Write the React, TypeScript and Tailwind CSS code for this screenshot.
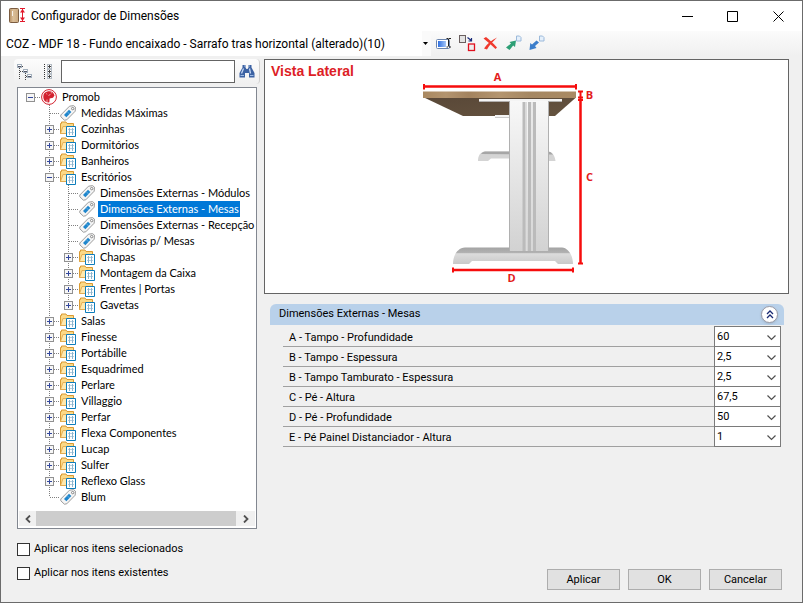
import { useState } from "react";
import type { ReactNode } from "react";

type TreeNode = { label: string; children?: TreeNode[] };

const TREE: TreeNode = {
  label: "Promob",
  children: [
    { label: "Medidas Máximas" },
    { label: "Cozinhas", children: [] },
    { label: "Dormitórios", children: [] },
    { label: "Banheiros", children: [] },
    {
      label: "Escritórios",
      children: [
        { label: "Dimensões Externas - Módulos" },
        { label: "Dimensões Externas - Mesas" },
        { label: "Dimensões Externas - Recepção" },
        { label: "Divisórias p/ Mesas" },
        { label: "Chapas", children: [] },
        { label: "Montagem da Caixa", children: [] },
        { label: "Frentes | Portas", children: [] },
        { label: "Gavetas", children: [] },
      ],
    },
    { label: "Salas", children: [] },
    { label: "Finesse", children: [] },
    { label: "Portábille", children: [] },
    { label: "Esquadrimed", children: [] },
    { label: "Perlare", children: [] },
    { label: "Villaggio", children: [] },
    { label: "Perfar", children: [] },
    { label: "Flexa Componentes", children: [] },
    { label: "Lucap", children: [] },
    { label: "Sulfer", children: [] },
    { label: "Reflexo Glass", children: [] },
    { label: "Blum" },
  ],
};

const FIELDS = [
  { label: "A - Tampo - Profundidade", value: "60" },
  { label: "B - Tampo - Espessura", value: "2,5" },
  { label: "B - Tampo Tamburato - Espessura", value: "2,5" },
  { label: "C - Pé - Altura", value: "67,5" },
  { label: "D - Pé - Profundidade", value: "50" },
  { label: "E - Pé Painel Distanciador - Altura", value: "1" },
];

function BrandIcon() {
  return (
    <svg width="16" height="16" viewBox="0 0 16 16" className="shrink-0">
      <circle cx="8" cy="8" r="7.4" fill="#fff" stroke="#d3222f" />
      <path d="M7.500 13.600A5.700 5.700 0 1 1 13.500 6.500L12 8.800 8.600 9.400 8.400 13.200z" fill="#d3222f" />
      <path d="M7.500 6.500l2-1.200M10.200 3.200l.6 1.200M5.200 4.600l1 .6M6 10.500v2.500" stroke="#fff" strokeWidth=".6" fill="none" />
    </svg>
  );
}

function TagIcon() {
  return (
    <svg width="16" height="16" viewBox="0 0 16 16" className="shrink-0">
      <path d="M9.500 1.200L13.500.600l2 1.600-.3 4L6.800 14.800 4.400 15.200.800 11.800v-1.800z" fill="#f5f5f5" stroke="#929292" strokeWidth=".9" />
      <path d="M9 4.800l2.400 2.300-5 5.200L4 10z" fill="#1f86cc" />
      <path d="M7.200 6.600l2.400 2.400" stroke="#8cc3e8" strokeWidth=".6" />
      <circle cx="12.700" cy="3.600" r="1.200" fill="#fff" stroke="#7d7d7d" strokeWidth=".9" />
    </svg>
  );
}

function FolderIcon() {
  return (
    <svg width="16" height="16" viewBox="0 0 16 16" className="shrink-0">
      <path d="M.500 12.500v-10h1v-1.500h4.500l1 1.500h6.500v10z" fill="#fbd987" stroke="#d99a33" />
      <path d="M.500 12.500L3 5.500h11v7z" fill="#ffe9ae" stroke="#dfa548" strokeWidth=".8" />
      <path d="M6.500 5.500h9v10h-9z" fill="#fff" stroke="#0d7dbb" />
      <path d="M8 8.500h6M8 11.500h6" stroke="#b3cfe0" fill="none" />
      <path d="M9.500 7v7M12.500 7v7" stroke="#8fb5cd" fill="none" />
    </svg>
  );
}

// One indentation column: the dotted connector lines that lead to an item.
function Guide({ up, down, across, children }: { up?: boolean; down?: boolean; across?: boolean; children?: ReactNode }) {
  return (
    <span className="relative flex h-4 w-[19px] shrink-0 items-center justify-center">
      <svg width="19" height="16" className="absolute inset-0" stroke="#808080" strokeDasharray="1 1" shapeRendering="crispEdges">
        {up && <path d="M9.5 0v8" />}
        {down && <path d="M9.5 8v8" />}
        {across && <path d="M10 8.5h9" />}
      </svg>
      {children}
    </span>
  );
}

function Toggle({ label, open, onClick }: { label: string; open: boolean; onClick: () => void }) {
  return (
    <button type="button" aria-label={label} aria-expanded={open} onClick={onClick} className="relative block size-[9px]">
      <svg width="9" height="9" viewBox="0 0 9 9" shapeRendering="crispEdges" className="block">
        <rect x=".5" y=".5" width="8" height="8" fill="#f6f6f6" stroke="#919191" />
        <path d={open ? "M2 4.5h5" : "M2 4.5h5M4.5 2v5"} stroke="#33479c" />
      </svg>
    </button>
  );
}

type RowProps = {
  node: TreeNode;
  last: boolean;
  trail: boolean[];
  selected: string;
  onSelect: (label: string) => void;
};

function TreeItem({ node, last, trail, selected, onSelect }: RowProps) {
  const [open, setOpen] = useState(node.label === "Promob" || node.label === "Escritórios");
  const root = node.label === "Promob";
  const active = node.label === selected;
  const childTrail = root ? [false] : [...trail, !last];

  return (
    <li>
      <div className="flex h-4 items-center">
        {trail.map((line, i) => (
          <Guide key={i} up={line} down={line} />
        ))}
        <Guide up={!root} down={!last} across>
          {node.children && <Toggle label={node.label} open={open} onClick={() => setOpen(!open)} />}
        </Guide>
        <span className="ml-px flex shrink-0">
          {root ? <BrandIcon /> : node.children ? <FolderIcon /> : <TagIcon />}
        </span>
        <button
          type="button"
          onClick={() => onSelect(node.label)}
          className={`ml-[3px] h-4 whitespace-nowrap pr-px pl-0.5 leading-4 ${active ? "bg-[#0078d7] text-white" : ""}`}
        >
          {node.label}
        </button>
      </div>
      {open && node.children && (
        <ul>
          {node.children.map((child, i) => (
            <TreeItem
              key={child.label}
              node={child}
              last={i === node.children!.length - 1}
              trail={childTrail}
              selected={selected}
              onSelect={onSelect}
            />
          ))}
        </ul>
      )}
    </li>
  );
}

function TitleBar() {
  return (
    <header className="flex h-[30px] items-center bg-white pl-2">
      <svg width="17" height="16" viewBox="0 0 17 16">
        <defs>
          <linearGradient id="door" x2="1">
            <stop offset="0" stopColor="#b58e62" />
            <stop offset=".4" stopColor="#dcc09a" />
            <stop offset="1" stopColor="#c9a87e" />
          </linearGradient>
        </defs>
        <rect x=".5" y=".5" width="9" height="14" rx="1" fill="url(#door)" stroke="#7b5c40" />
        <path d="M3.500 3v5" stroke="#fff" strokeOpacity=".8" />
        <path d="M11 .500h5M11 13.500h5M13.500 1v12" stroke="#e2182b" />
        <path d="M13.500 1l2.500 3.500h-5zM13.500 13l2.500-3.500h-5z" fill="#e2182b" />
      </svg>
      <h1 className="ml-[5px] flex-1 font-['Roboto',sans-serif] text-[12px]">Configurador de Dimensões</h1>
      <button type="button" aria-label="Minimizar" className="flex h-full w-[45px] items-center justify-center">
        <svg width="11" height="11" stroke="#000"><path d="M0 5.5h11" /></svg>
      </button>
      <button type="button" aria-label="Maximizar" className="flex h-full w-[45px] items-center justify-center">
        <svg width="11" height="11" fill="none" stroke="#000"><path d="M.5.5h10v10H.5z" /></svg>
      </button>
      <button type="button" aria-label="Fechar" className="flex h-full w-[47px] items-center justify-center">
        <svg width="11" height="11" stroke="#000"><path d="M.5.5l10 10M10.5.5l-10 10" /></svg>
      </button>
    </header>
  );
}

function MainToolbar() {
  return (
    <div className="flex h-[25px] items-center bg-linear-to-b from-[#fbfbfb] to-[#f0f0f0]">
      <div className="relative h-full w-[430px] shrink-0 bg-linear-to-r from-white from-98% to-[#fafafa] to-98%">
        <select
          aria-label="Configuração"
          className="h-full w-full appearance-none bg-transparent pl-[5px] font-['Roboto',sans-serif] text-[12px] outline-none"
        >
          <option>COZ - MDF 18 - Fundo encaixado - Sarrafo tras horizontal (alterado)(10)</option>
        </select>
        <svg width="5" height="3" className="pointer-events-none absolute top-[11px] right-[3px]"><path d="M0 0h5L2.5 3z" /></svg>
      </div>
      <div className="ml-[5px] flex items-center gap-[7px] pb-px">
        <button type="button" aria-label="Renomear">
          <svg width="16" height="16" viewBox="0 0 16 16" className="block">
            <defs>
              <linearGradient id="field" x2="1">
                <stop offset="0" stopColor="#2f6fe0" />
                <stop offset="1" stopColor="#a5c6f7" />
              </linearGradient>
            </defs>
            <rect x=".5" y="4.500" width="13" height="9" rx="1" fill="#fff" stroke="#6b84ad" />
            <rect x="2" y="6" width="8" height="6" fill="url(#field)" />
            <path d="M12.500 3.500v8" stroke="#222" />
            <path d="M10.500 3.500h1.500M13 3.500h2M10.500 12h1.500M13 12h2" stroke="#222" />
          </svg>
        </button>
        <button type="button" aria-label="Duplicar">
          <svg width="17" height="17" viewBox="0 0 17 17" className="block">
            <rect x=".5" y=".5" width="6" height="7" fill="#e3e3e3" stroke="#6a5f5f" />
            <path d="M8.500 2.500l3.500 2.800M12.500 3v3h-3" fill="none" stroke="#1b2c7a" strokeWidth="1.2" />
            <rect x="9.500" y="9" width="6" height="6.500" fill="#eee" stroke="#e0101e" strokeWidth="1.300" />
          </svg>
        </button>
        <button type="button" aria-label="Excluir">
          <svg width="16" height="16" viewBox="0 0 16 16" className="block" fill="#f03a2e">
            <path d="M.5 3.500L3 2C6 4.500 10 8 14 12.500L12.500 14C9 10.500 5 7 .5 3.500z" />
            <path d="M14 2.500C10 6.500 6.500 10 4 14.500L1 13.500C4 9 8.500 5 14 2.500z" />
          </svg>
        </button>
        <button type="button" aria-label="Exportar">
          <svg width="16" height="16" viewBox="0 0 16 16" className="block">
            <path d="M0 12.500L5 8.500 3.500 7l6.500-1.500L9 12 7.200 10.500 3.500 15z" fill="#2d9f75" />
            <path d="M10.500 1h3L15 2.500V6h-4.500z" fill="#e5f0fb" stroke="#9bb9da" />
          </svg>
        </button>
        <button type="button" aria-label="Importar">
          <svg width="16" height="16" viewBox="0 0 16 16" className="block">
            <path d="M10 7.500L6 11 7.500 13 .5 15l.8-7L3 9.500 7.500 5.500z" fill="#3c7ecb" />
            <path d="M10.500 1h3L15 2.500V6h-4.500z" fill="#e5f0fb" stroke="#9bb9da" />
          </svg>
        </button>
      </div>
    </div>
  );
}

function SearchBar() {
  return (
    <div className="mx-[-3px] flex h-[25px] items-center rounded-sm border-r border-[#d0d0d0] bg-linear-to-b from-[#fcfcfc] to-[#f0f0f0] pl-[3px] pr-1">
      <button type="button" aria-label="Recolher tudo">
        <svg width="16" height="16" viewBox="0 0 16 16" className="block" fill="none" shapeRendering="crispEdges">
          <path d="M2.500 4v12M5 2.500h2M8.500 9v7M3 7.500h3M9 12.500h3" stroke="#444" strokeDasharray="1 1" />
          <path d="M.500.500h4v3h-4zM6.500 5.500h4v3h-4zM10.500 10.500h4v3h-4z" fill="#fff" stroke="#a3b0bd" />
          <path d="M1 2h3M7 7h3M11 12h3" stroke="#556" />
        </svg>
      </button>
      <button type="button" aria-label="Expandir tudo" className="ml-2">
        <svg width="13" height="16" viewBox="0 0 13 16" className="block" fill="none" shapeRendering="crispEdges">
          <path d="M3.500 0v16M8.500 0v16" stroke="#333" strokeDasharray="1 1" />
          <path d="M6.500 .500h4v4h-4zM6.500 5.500h4v4h-4zM6.500 10.500h4v4h-4z" fill="#fff" stroke="#b4bcc4" />
          <path d="M7 2.500h3M8.500 1v3M7 7.500h3M8.500 6v3M7 12.500h3M8.500 11v3" stroke="#444" />
        </svg>
      </button>
      <input aria-label="Pesquisar" className="ml-[7px] h-[23px] min-w-0 flex-1 border border-[#646464] bg-white px-1 outline-none" />
      <button type="button" aria-label="Localizar" className="ml-1">
        <svg width="16" height="16" viewBox="0 0 16 16" className="block">
          <path d="M3.500 1h3v2.500L7.500 5h1L9.500 3.500V1h3v2.500L15.500 9v4.500h-5.500V9h-4v4.500H.500V9l3-5.500z" fill="#3c62a3" />
          <path d="M4.500 4.500L2.500 9.500M10.500 4.500L11.500 9.500" stroke="#c3d6f2" strokeWidth="1.300" />
          <path d="M1.500 11.500h3.500M11 11.500h3.500M5 2h1M10 2h1" stroke="#9dbbe6" />
        </svg>
      </button>
    </div>
  );
}

function TreePanel() {
  const [selected, setSelected] = useState("Dimensões Externas - Mesas");

  return (
    <div className="mt-[3px] flex flex-1 flex-col border border-[#828790] bg-white px-px">
      <ul className="flex-1 overflow-hidden pt-px pb-1.5 pl-0.5 font-['Lato',sans-serif] text-[11px]">
        <TreeItem node={TREE} last trail={[]} selected={selected} onSelect={setSelected} />
      </ul>
      <div className="mb-0.5 flex h-[15px] bg-[#f0f0f0]">
        <button type="button" aria-label="Rolar para a esquerda" className="flex w-[17px] items-center justify-center">
          <svg width="6" height="8" fill="none" stroke="#505050" strokeWidth="1.800"><path d="M5 .500L1.500 4 5 7.500" /></svg>
        </button>
        <div className="flex-1 bg-[#cdcdcd]" />
        <button type="button" aria-label="Rolar para a direita" className="flex w-[19px] items-center justify-center">
          <svg width="6" height="8" fill="none" stroke="#505050" strokeWidth="1.800"><path d="M1 .500L4.500 4 1 7.500" /></svg>
        </button>
      </div>
    </div>
  );
}

// Side view of the desk with its dimension lines.
function DeskDrawing() {
  return (
    <svg width="220" height="233" viewBox="0 0 220 233" role="img" aria-label="Vista lateral da mesa" className="shrink-0">
      <defs>
        <linearGradient id="wood" x2="1">
          <stop offset="0" stopColor="#a98860" />
          <stop offset=".15" stopColor="#b3946f" />
          <stop offset=".3" stopColor="#a3835f" />
          <stop offset=".5" stopColor="#b4956f" />
          <stop offset=".7" stopColor="#a58762" />
          <stop offset="1" stopColor="#a98a64" />
        </linearGradient>
        <linearGradient id="under" x2="1" y2="1">
          <stop offset="0" stopColor="#594838" />
          <stop offset="1" stopColor="#65533f" />
        </linearGradient>
        <linearGradient id="leg" x2="0" y2="1">
          <stop offset="0" stopColor="#f8f8f8" />
          <stop offset="1" stopColor="#d2d2d2" />
        </linearGradient>
        <linearGradient id="foot" x2="0" y2="1">
          <stop offset="0" stopColor="#a4a4a4" />
          <stop offset=".3" stopColor="#b0b0b0" />
          <stop offset=".38" stopColor="#dcdcdc" />
          <stop offset="1" stopColor="#c9c9c9" />
        </linearGradient>
      </defs>

      {/* Rear foot */}
      <path d="M78 101c0-5 2-9 7-9.500h63c5 .5 7 5 7.500 9.500H145l-2-2.500H91L88 101z" fill="#d4d4d4" />
      <path d="M81 94q1.500-2.500 4-2.500h63q3 0 5 3z" fill="#a6a6a6" />

      {/* Top */}
      <path d="M24 37.500h152L155 56H63z" fill="url(#under)" />
      <path d="M23 31.500h153V38H23z" fill="url(#wood)" />
      <path d="M79 39h83v2.500H79zM95 55h14v2H95z" fill="#f4f4f4" />
      <path d="M79 41.500h83M95 57.500h14" stroke="#b5b5b5" strokeWidth=".7" />

      {/* Front foot */}
      <path d="M53 204c0-8 4-16 12-16.500h97c7 .5 11 9 11 16.500h-15l-3-3H72l-3 3z" fill="url(#foot)" />

      {/* Column */}
      <path d="M109 41h40v150h-40z" fill="url(#leg)" />
      <path d="M109.500 41v150M148.500 41v150" stroke="#b0b0b0" />
      <path d="M124 42v149M129.500 42v149M134.500 42v149" stroke="#bbb" strokeWidth="3" />
      <path d="M126.500 42v149M132 42v149" stroke="#dcdcdc" strokeWidth="1" />

      <g stroke="#f60d0d" fill="none">
        <path d="M24 26.500h152M53 210h120M180.500 40v163" strokeWidth="2.500" />
        <path d="M24 24v5.500M176 24v5.500M53 207.500v5M173 207.500v5M178 203.500h5M178 31.500h5M178 37.500h5M178 40h5M180.500 31v8" strokeWidth="2" />
      </g>
      <g className="fill-[#e31b1b] font-['Open_Sans',sans-serif] text-[11px] font-bold" textAnchor="middle">
        <text x="97.500" y="21">A</text>
        <text x="189.500" y="39">B</text>
        <text x="189.500" y="121">C</text>
        <text x="111.500" y="222">D</text>
      </g>
    </svg>
  );
}

function Preview() {
  return (
    <section className="flex border border-[#646464] bg-white">
      <h2 className="w-[135px] shrink-0 pt-0.5 pl-1.5 font-['Liberation_Sans',sans-serif] text-[14px] leading-[18px] font-bold text-[#dd1e26]">
        Vista Lateral
      </h2>
      <DeskDrawing />
    </section>
  );
}

function Dimensions() {
  const [open, setOpen] = useState(true);

  return (
    <section className="mt-2.5 mr-[5px] ml-1.5">
      <div className="flex h-[21px] items-center rounded-t-md bg-[#b9d1ea] pr-1.5 pl-[9px]">
        <h2 className="flex-1">Dimensões Externas - Mesas</h2>
        <button
          type="button"
          aria-label="Recolher"
          aria-expanded={open}
          onClick={() => setOpen(!open)}
          className="flex size-[17px] items-center justify-center rounded-full border border-[#9a9aa6] bg-white shadow-sm"
        >
          <svg width="8" height="9" fill="none" stroke="#1a2a73" strokeWidth="1.300"><path d="M1 4l3-3 3 3M1 8l3-3 3 3" /></svg>
        </button>
      </div>
      {open && (
        <div className="mt-0.5 mr-[3px] ml-[13px]">
          {FIELDS.map((field, i) => (
            <div key={i} className="flex h-5 items-stretch border-b border-[#a0a0a0]">
              <label htmlFor={`field-${i}`} className="flex-1 pt-px pl-1.5 leading-5">{field.label}</label>
              <div className="relative -mt-px -mb-px w-[67px] border border-[#7a7a7a] bg-white">
                <select
                  id={`field-${i}`}
                  defaultValue={field.value}
                  className="block h-full w-full appearance-none bg-transparent pl-0.5 text-[11px] leading-[18px] outline-none"
                >
                  <option>{field.value}</option>
                </select>
                <svg width="9" height="6" className="pointer-events-none absolute top-2 right-1" fill="none" stroke="#505050" strokeWidth="1.200">
                  <path d="M.500.500l4 4 4-4" />
                </svg>
              </div>
            </div>
          ))}
        </div>
      )}
    </section>
  );
}

const BUTTON = "h-[21px] w-[73px] border border-[#adadad] bg-[#e1e1e1] text-[11px] leading-none";
const CHECK = "size-[13px] appearance-none border border-[#333] bg-white checked:bg-[#0078d7]";

export default function App() {
  return (
    <main className="flex min-h-screen flex-col border border-[#6b6b6b] bg-[#f0f0f0] font-['Roboto',sans-serif] text-[11px] text-black">
      <TitleBar />
      <MainToolbar />

      <div className="flex flex-1 gap-[7px] pt-[3px] pr-[13px] pl-4">
        <aside className="flex w-[240px] shrink-0 flex-col">
          <SearchBar />
          <TreePanel />
        </aside>
        <div className="min-w-0 flex-1">
          <Preview />
          <Dimensions />
        </div>
      </div>

      <footer className="flex items-end justify-between pt-[11px] pr-5 pb-3 pl-4">
        <div className="flex flex-col gap-1.5 pb-2">
          <label className="flex h-[18px] items-center gap-1">
            <input type="checkbox" className={CHECK} />
            Aplicar nos itens selecionados
          </label>
          <label className="flex h-[18px] items-center gap-1">
            <input type="checkbox" className={CHECK} />
            Aplicar nos itens existentes
          </label>
        </div>
        <div className="flex gap-2">
          <button type="button" className={BUTTON}>Aplicar</button>
          <button type="button" className={BUTTON}>OK</button>
          <button type="button" className={BUTTON}>Cancelar</button>
        </div>
      </footer>
    </main>
  );
}
